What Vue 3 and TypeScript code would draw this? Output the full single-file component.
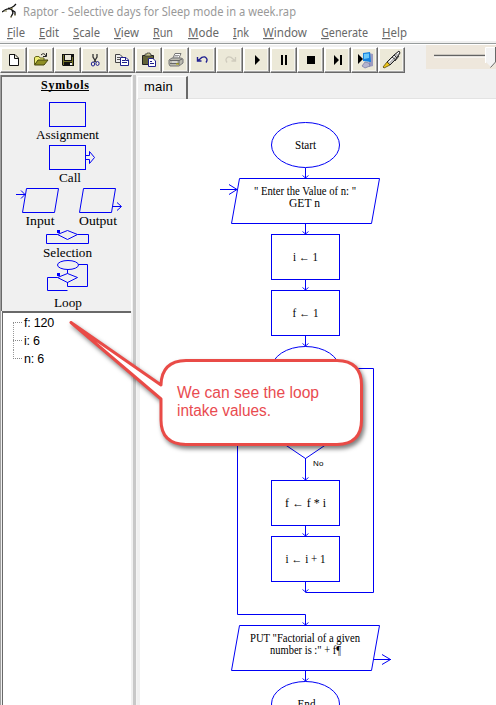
<script setup lang="ts">
interface MenuEntry { key: string; rest: string; width: number; text: number }
interface Variable { name: string; value: number }
interface Step { y: number; text: string; length: number }

const menus: MenuEntry[] = [
  { key: 'F', rest: 'ile', width: 32, text: 18 },
  { key: 'E', rest: 'dit', width: 34, text: 20 },
  { key: 'S', rest: 'cale', width: 41, text: 27 },
  { key: 'V', rest: 'iew', width: 39, text: 25 },
  { key: 'R', rest: 'un', width: 35, text: 20 },
  { key: 'M', rest: 'ode', width: 45, text: 31 },
  { key: 'I', rest: 'nk', width: 30, text: 16 },
  { key: 'W', rest: 'indow', width: 58, text: 44 },
  { key: 'G', rest: 'enerate', width: 61, text: 47 },
  { key: 'H', rest: 'elp', width: 40, text: 25 },
]
const tools = ['new', 'open', 'save', 'cut', 'copy', 'paste', 'print', 'undo', 'redo', 'play', 'pause', 'stop', 'step', 'server', 'pen']
const variables: Variable[] = [
  { name: 'f', value: 120 },
  { name: 'i', value: 6 },
  { name: 'n', value: 6 },
]
const steps: Step[] = [
  { y: 234.5, text: 'i ← 1', length: 25 },
  { y: 290.5, text: 'f ← 1', length: 26 },
  { y: 480.5, text: 'f ← f * i', length: 41 },
  { y: 536.5, text: 'i ← i + 1', length: 40 },
]
const arrowTips = [178, 234, 290, 346, 480, 536, 592, 625, 681]
</script>

<template>
  <div class="window">
    <header class="titlebar">
      <svg class="logo" width="18" height="18" viewBox="0 0 18 18">
        <path d="M0 9L3 7L5 6L9 5L12 3L14 1M6 5L10 7L11 10L9 14M10 7L13 9V12" fill="none" stroke="#111" stroke-width="1.300" />
        <path d="M2 8H5M8 14H10M12 12H14M8 6L11 5" stroke="#858150" />
      </svg>
      <svg class="title" width="300" height="22">
        <text x="0" y="14" textLength="273" lengthAdjust="spacingAndGlyphs">Raptor - Selective days for Sleep mode in a week.rap</text>
      </svg>
    </header>
    <nav class="menubar">
      <svg v-for="m in menus" :key="m.rest" :width="m.width" height="17">
        <text x="0" y="13" :textLength="m.text" lengthAdjust="spacingAndGlyphs"><tspan class="mnemonic">{{ m.key }}</tspan>{{ m.rest }}</text>
      </svg>
    </nav>

    <div class="toolbar">
      <div class="buttons">
        <button v-for="t in tools" :key="t" type="button">
          <svg width="20" height="20" viewBox="0 0 20 20">
            <path v-if="t === 'new'" d="M5.500 4.500H11L14.500 8V15.500H5.500ZM10.500 4.500V8.500H14.500" fill="#fff" stroke="#111" />
            <g v-else-if="t === 'open'">
              <path d="M3.500 14.500V7.500L5 6.500H8L9 8H13V10" fill="#eeee75" stroke="#65651b" />
              <path d="M3.500 15L7 10H17L13 15Z" fill="#8e8e23" stroke="#45450c" />
              <path d="M10 5Q13 2 15 6M15.500 3V6.500H12" fill="none" stroke="#222" />
            </g>
            <g v-else-if="t === 'save'">
              <path d="M4 4H16V16H5L4 15Z" fill="#111" />
              <path d="M5.500 5V15M14.500 7V15M6 11.500H14" stroke="#737329" />
              <path d="M7 5H13V10H7Z" fill="#e9e6d6" /><path d="M12 13H14V15H12Z" fill="#eee" />
            </g>
            <g v-else-if="t === 'cut'" fill="none">
              <path d="M8 4V7L11 12M12 4V7L9 12" stroke="#333" stroke-width="1.300" />
              <ellipse cx="8" cy="14" rx="1.700" ry="2" stroke="#202091" /><ellipse cx="12.500" cy="13.500" rx="1.600" ry="2" stroke="#202091" />
            </g>
            <g v-else-if="t === 'copy'">
              <path d="M3.500 4.500H8L10.500 7V12.500H3.500Z" fill="#eee" stroke="#444" /><path d="M5 7.500H8M5 9.500H9" stroke="#555" />
              <path d="M8.500 7.500H14L16.500 10V15.500H8.500Z" fill="#fff" stroke="#20208c" /><path d="M10 10.500H13M10 12.500H15M13.500 7.500V10.500H16" stroke="#20208c" fill="none" />
            </g>
            <g v-else-if="t === 'paste'">
              <path d="M3.500 5.500H14.500V14.500H3.500Z" fill="#626336" stroke="#222" /><path d="M6 6V4H8V3H11V4H12V6Z" fill="#c4c28a" stroke="#333" stroke-width=".7" />
              <path d="M9.500 8.500H14L16.500 11V16.500H9.500Z" fill="#fff" stroke="#20208c" /><path d="M11 11.500H13M11 13.500H15" stroke="#20208c" />
            </g>
            <g v-else-if="t === 'print'">
              <path d="M7 8L9 3.500H15L13 8" fill="#fff" stroke="#777" /><path d="M9 5.500H13M8 7H12" stroke="#999" />
              <path d="M3 10L6 8H15L17 9V13L13 16H4L3 14Z" fill="#bbbab0" stroke="#777" /><path d="M4 10.500H13L16 9M4 13.500H13M13 10V15" fill="none" stroke="#666" /><path d="M6 12H11" stroke="#eee" />
              <path d="M10 14H13" stroke="#bbb000" />
            </g>
            <path v-else-if="t === 'undo'" d="M4.500 7V11H8.500M5 10.500L7 9Q9 6.500 12 7Q15.500 9 13 12.500" fill="none" stroke="#202091" stroke-width="1.400" />
            <path v-else-if="t === 'redo'" d="M15.500 7V11H11.500M15 10.500L13 9Q11 6.500 8 7Q4.500 9 7 12.500" fill="none" stroke="#cfcbbd" stroke-width="1.300" />
            <path v-else-if="t === 'play'" d="M8 5V15L13 10Z" fill="#000" />
            <path v-else-if="t === 'pause'" d="M7 5H9V15H7ZM11 5H13V15H11Z" fill="#000" />
            <path v-else-if="t === 'stop'" d="M6 6H14V14H6Z" fill="#000" />
            <path v-else-if="t === 'step'" d="M6 5V15L11 10ZM12 5H14V15H12Z" fill="#000" />
            <g v-else-if="t === 'server'">
              <path d="M14 3L18 4V16L14 17Z" fill="#9c9bc0" /><path d="M8 3L15 2L16 12L8 11Z" fill="#1682df" /><path d="M9 4L14 3.500V8L9 9Z" fill="#6bc9fa" />
              <path d="M10 12L14 13L15 16L10 18L7 16Z" fill="#b5b5cf" stroke="#7478a0" stroke-width=".7" /><path d="M3 4V14L8 9Z" fill="#000" />
            </g>
            <g v-else>
              <path d="M5 12L12 5L17 1L18 3L14 9L8 15Z" fill="#bdbdbd" stroke="#222" /><path d="M7 12L13 6M15 4L17 2" stroke="#fff" />
              <path d="M10 7L14 10M12 5L15 8M13 11L17 6" stroke="#333" /><path d="M5 12L8 15L2 18L1 17Z" fill="#efc718" stroke="#55470a" stroke-width=".8" />
            </g>
          </svg>
        </button>
      </div>
      <div class="speed">
        <svg width="70" height="24">
          <path d="M8 10.500H60" stroke="#636363" stroke-width="1.500" /><path d="M8 12H60" stroke="#fff" />
          <path d="M60 2H70V17L65 22L60 17Z" fill="#f3f3f3" />
          <path d="M59.500 18V2.500H69" fill="none" stroke="#fff" /><path d="M69.500 2V17L64.500 22.500" fill="none" stroke="#686868" />
        </svg>
      </div>
    </div>

    <main class="body">
      <aside class="side">
        <section class="symbols">
          <svg width="129" height="234" viewBox="2 77 129 234">
            <text class="heading" x="65" y="89" textLength="48" text-anchor="middle">Symbols</text>
            <path d="M41 90.500H89" stroke="#000" />
            <g class="shape">
              <rect x="49.500" y="102.500" width="36" height="24" />
              <rect x="49.500" y="145.500" width="36" height="24" />
              <path d="M86 155.500H89.500V151.500L94.500 157.500L89.500 163.500V159.500H86" />
              <path d="M26.500 188.500H58.500L54.500 212.500H22.500ZM16 194.500H25M21 190.500L25 194.500L21 198.500" />
              <path d="M83.500 188.500H115.500L111.500 212.500H79.500ZM112 206.500H121M117 202.500L121.500 206.500L117 210.500" />
              <path d="M57.500 234.500L67.500 230.500L77.500 234.500L67.500 239.500ZM57.500 234.500H46.500V243.500H88.500V234.500H77.500" />
              <ellipse cx="68" cy="265" rx="10.500" ry="4.500" />
              <path d="M67.500 270V273.500L77.500 277.500L67.500 282.500L57.500 277.500L67.500 273.500M57.500 277.500H47.500V290.500H67.500M67.500 282V286.500H87.500V264.500H78.500" />
            </g>
            <path d="M57 230H60V233H57ZM57 273H60V276H57Z" fill="#00f" />
            <g class="caption">
              <text x="67.500" y="139" textLength="63" lengthAdjust="spacingAndGlyphs">Assignment</text>
              <text x="70" y="182" textLength="22" lengthAdjust="spacingAndGlyphs">Call</text>
              <text x="40" y="225" textLength="29" lengthAdjust="spacingAndGlyphs">Input</text>
              <text x="98" y="225" textLength="38" lengthAdjust="spacingAndGlyphs">Output</text>
              <text x="67.500" y="257" textLength="49" lengthAdjust="spacingAndGlyphs">Selection</text>
              <text x="68" y="307" textLength="28" lengthAdjust="spacingAndGlyphs">Loop</text>
            </g>
          </svg>
        </section>
        <ul class="watch">
          <li v-for="v in variables" :key="v.name">{{ v.name }}: {{ v.value }}</li>
        </ul>
      </aside>
      <div class="splitter"></div>
      <section class="editor">
        <div class="tabs"><div class="tab">main</div></div>
        <svg class="chart" width="356" height="606" viewBox="140 99 356 606">
          <g class="shape">
            <ellipse cx="305.500" cy="145" rx="34" ry="22.500" />
            <path d="M239.500 178.500H379.500L371.500 223.500H231.500Z" />
            <path d="M220 189.500H237M229 184.500L237 189.500L229 194.500" />
            <path d="M305.500 168V178M305.500 224V234M305.500 280V290M305.500 336V346M305.500 458V480M305.500 526V536M305.500 582V592" />
            <rect v-for="s in steps" :key="s.y" x="271.500" :y="s.y" width="68" height="45" />
            <ellipse cx="305.500" cy="369" rx="34" ry="22.500" />
            <path d="M339.500 368.500H373.500V592.500H305.500" />
            <path d="M305.500 391V413L339.500 435.500L305.500 458.500L271.500 435.500L305.500 413M271.500 435.500H237.500V614.500H305.500V625" />
            <path d="M239.500 625.500H379.500L371.500 670.500H231.500Z" />
            <path d="M374 659.500H391M382 654.500L390.500 659.500L382 664.500M305.500 671V681" />
            <ellipse cx="305.500" cy="704" rx="34" ry="22.500" />
            <path v-for="y in arrowTips" :key="y" class="tip" :d="`M302.500 ${y - 2.500}L305.500 ${y}L308.500 ${y - 2.500}`" />
          </g>
          <g class="label">
            <text x="305.500" y="149" textLength="21" lengthAdjust="spacingAndGlyphs">Start</text>
            <text x="305" y="195" textLength="102" lengthAdjust="spacingAndGlyphs">" Enter the Value of n: "</text>
            <text x="304.500" y="207" textLength="31" lengthAdjust="spacingAndGlyphs">GET n</text>
            <text v-for="s in steps" :key="s.y" x="305.500" :y="s.y + 26.500" :textLength="s.length" lengthAdjust="spacingAndGlyphs">{{ s.text }}</text>
            <text x="305" y="642" textLength="110" lengthAdjust="spacingAndGlyphs">PUT "Factorial of a given</text>
            <text x="305.500" y="654" textLength="71" lengthAdjust="spacingAndGlyphs">number is :" + f¶</text>
            <text x="306.500" y="708" textLength="18" lengthAdjust="spacingAndGlyphs">End</text>
          </g>
          <text class="branch" x="313" y="466" textLength="10.500">No</text>
        </svg>
      </section>
    </main>

    <svg class="callout" width="310" height="145" viewBox="65 315 310 145">
      <path d="M186 360.500H337Q361.500 361 361.500 385V420Q361.500 444 337 444.500H186Q161 444 161 420V399L71 322.500L161 385Q161.500 361 186 360.500Z" />
      <text x="177" y="398" textLength="142" lengthAdjust="spacingAndGlyphs">We can see the loop</text>
      <text x="177" y="416" textLength="94" lengthAdjust="spacingAndGlyphs">intake values.</text>
    </svg>
  </div>
</template>

<style>
body { margin: 0; overflow: hidden; }
</style>
<style scoped>
.window { position: relative; width: 496px; height: 705px; overflow: hidden; display: flex; flex-direction: column; background: #f0f0f0; font-family: "Liberation Sans", Arial, sans-serif; }
.titlebar { display: flex; height: 24px; flex: none; background: #fff; }
.logo { margin: 3px 3px 0 2px; }
.title { margin-top: 2px; font: 12px "Noto Sans", sans-serif; fill: #999; }
.menubar { display: flex; height: 17px; flex: none; padding-left: 7px; background: #fff; font: 12px "Noto Sans", sans-serif; }
.menubar svg { fill: #686868; flex: none; }
.mnemonic { text-decoration: underline; }
.toolbar { display: flex; box-sizing: border-box; height: 34px; flex: none; border-top: 2px solid #f0f0f0; box-shadow: inset 0 1px #979c9c, inset 0 2px #fff; }
.buttons { display: flex; padding: 4px 0 0 0; width: 426px; box-sizing: border-box; }
button { width: 27px; height: 26px; box-sizing: border-box; padding: 0; border: solid; border-width: 1px; border-color: #fff #696969 #696969 #fff; background: #ece9d8; box-shadow: inset -1px -1px #a5a5a5, inset 1px 1px #fff, inset -2px -2px #f5f4ee; display: flex; align-items: center; justify-content: center; }
button svg { flex: none; }
.speed { margin-top: 2px; width: 70px; height: 24px; background: #eee7dc; }
.body { display: flex; flex: 1; min-height: 0; }
.side { width: 132px; display: flex; flex-direction: column; box-sizing: border-box; border-left: 1px solid #a0a0a0; }
.symbols { box-sizing: border-box; height: 236px; border-top: 2px solid #737373; border-left: 1px solid #696969; border-right: 1px solid #fff; overflow: hidden; }
.symbols svg, .chart { display: block; }
.shape { fill: none; stroke: #0000f5; stroke-width: 1; }
.heading { font: bold 12px "Liberation Serif", serif; }
.caption { font: 13.5px "Liberation Serif", serif; text-anchor: middle; }
.watch { box-sizing: border-box; flex: 1; width: 129px; margin: 0 0 0 1px; padding: 1px 0 0 10px; list-style: none; border-top: 2px solid #696969; border-left: 1px solid #696969; background: #fff; font-size: 12.500px; line-height: 18px; letter-spacing: -.2px; }
.watch li { height: 18px; padding-left: 11px; background: repeating-linear-gradient(90deg, #888 0 1px, #fff 1px 2px) 0 8px / 9px 1px no-repeat, repeating-linear-gradient(0deg, #999 0 1px, #fff 1px 2px) 0 0 / 1px 18px no-repeat; }
.watch li:first-child { background-position: 0 8px, 0 8px; }
.watch li:last-child { background-size: 9px 1px, 1px 9px; }
.splitter { width: 4px; margin-left: 1px; box-sizing: border-box; background: #c8c8c8; border-right: 1px solid #f4f4f4; }
.editor { flex: 1; display: flex; flex-direction: column; min-width: 0; }
.tabs { height: 24px; box-sizing: border-box; padding-top: 1px; border-bottom: 1px solid #e3e3e3; }
.tab { width: 51px; height: 23px; box-sizing: border-box; padding: 2px 0 0 6px; border-top: 1px solid #fff; border-left: 1px solid #fff; border-right: 2px solid #696969; font-size: 13px; line-height: 15px; letter-spacing: .2px; }
.chart { background: #fff; margin-left: 3px; flex: none; }
.tip { stroke-width: .9; }
.label { font: 11.500px "Liberation Serif", serif; text-anchor: middle; }
.branch { font: 8px "Liberation Sans", sans-serif; }
.callout { position: absolute; left: 65px; top: 315px; overflow: visible; }
.callout path { fill: #fff; stroke: #e94b47; stroke-width: 3; stroke-linejoin: round; filter: drop-shadow(2px 3px 2px rgba(0, 0, 0, .5)); }
.callout text { font-size: 16px; fill: #e94b50; }
</style>
